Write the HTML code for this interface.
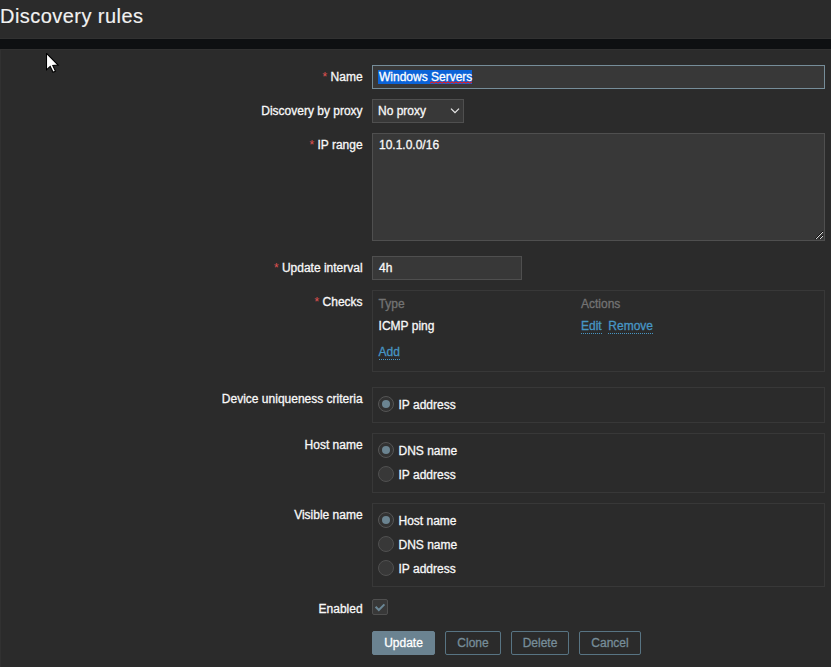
<!DOCTYPE html>
<html><head><meta charset="utf-8">
<style>
html,body{margin:0;padding:0;}
body{width:831px;height:667px;overflow:hidden;background:#2b2b2b;font-family:"Liberation Sans",Arial,sans-serif;font-size:12px;color:#f8f8f8;position:relative;-webkit-text-stroke:0.3px;}
.abs{position:absolute;}
h1{position:absolute;left:0;top:4px;margin:0;font-size:20px;letter-spacing:0.45px;font-weight:normal;line-height:24px;color:#f2f2f2;white-space:nowrap;-webkit-text-stroke:0.15px;}
.band{position:absolute;left:0;top:39px;width:831px;height:10px;background:#0e1012;}
.lbl{position:absolute;right:468.4px;white-space:nowrap;line-height:14px;height:14px;text-align:right;}
.req{color:#e05252;-webkit-text-stroke:0;}
.inp{position:absolute;box-sizing:border-box;background:#383838;border:1px solid #4f4f4f;line-height:14px;padding:4px 6px;white-space:nowrap;}
.box{position:absolute;box-sizing:border-box;border:1px solid #383838;left:372px;width:453px;}
.t{position:absolute;line-height:14px;white-space:nowrap;}
.grey{color:#737373;}
a.lnk{color:#4796c4;text-decoration:none;border-bottom:1px dotted #4796c4;}
.radio{position:absolute;box-sizing:border-box;width:16px;height:16px;border-radius:50%;border:1px solid #505050;background:#383838;}
.radio.on{background:#323232;border-color:#555;}
.radio.on::after{content:"";position:absolute;left:3px;top:3px;width:8px;height:8px;border-radius:50%;background:#6b8491;}
.btn{position:absolute;box-sizing:border-box;top:631px;height:24px;line-height:22px;text-align:center;border:1px solid #587483;color:#768d99;border-radius:2px;background:transparent;}
.btn.pri{background:#6b8391;border-color:#6b8391;color:#fff;}
</style></head><body>
<h1>Discovery rules</h1>
<div class="abs" style="left:0;top:38px;width:831px;height:1px;background:#313131"></div>
<div class="band"></div>
<div class="abs" style="left:0;top:49px;width:831px;height:1px;background:#313131"></div>
<div class="abs" style="left:0;top:49px;width:1px;height:618px;background:#313131"></div>
<svg class="abs" style="left:46px;top:53px" width="14" height="21" viewBox="0 0 14 21"><path d="M0.5 0.3 L0.5 16.8 L4.2 13.4 L7.1 19.3 L9.5 18.2 L6.8 12.4 L12.1 12.1 Z" fill="#fff" stroke="#000" stroke-width="1.1" stroke-linejoin="miter"/></svg>

<div class="lbl" style="top:70px"><span class="req">*</span> Name</div>
<div class="inp" style="left:372px;top:65px;width:453px;height:24px;border-color:#768d99;"><span style="background:#0b63d8;color:#fff;display:inline-block;height:14px;margin-left:-1px;padding-left:1px;">Windows Servers</span></div>

<svg class="abs" style="left:430px;top:81px" width="42" height="3" viewBox="0 0 42 3"><path d="M0 2.2 L2 0.8 L4 2.2 L6 0.8 L8 2.2 L10 0.8 L12 2.2 L14 0.8 L16 2.2 L18 0.8 L20 2.2 L22 0.8 L24 2.2 L26 0.8 L28 2.2 L30 0.8 L32 2.2 L34 0.8 L36 2.2 L38 0.8 L40 2.2 L42 0.8 L44 2.2" fill="none" stroke="#f01818" stroke-width="1.1"/></svg>
<div class="lbl" style="top:104px">Discovery by proxy</div>
<div class="inp" style="left:372px;top:99px;width:92px;height:24px;padding-left:5px;">No proxy
<svg class="abs" style="right:2px;top:7px" width="12" height="8" viewBox="0 0 12 8"><path d="M2 1.6 L6 5.6 L10 1.6" fill="none" stroke="#e8e8e8" stroke-width="1.25"/></svg></div>

<div class="lbl" style="top:138px"><span class="req">*</span> IP range</div>
<div class="inp" style="left:372px;top:133px;width:453px;height:108px;">10.1.0.0/16
<svg style="position:fixed;left:815px;top:231px" width="8" height="8" viewBox="0 0 8 8" shape-rendering="crispEdges"><rect x="0" y="7" width="1" height="1" fill="#101010"/><rect x="1" y="6" width="1" height="1" fill="#101010"/><rect x="2" y="5" width="1" height="1" fill="#101010"/><rect x="3" y="4" width="1" height="1" fill="#101010"/><rect x="4" y="3" width="1" height="1" fill="#101010"/><rect x="5" y="2" width="1" height="1" fill="#101010"/><rect x="6" y="1" width="1" height="1" fill="#101010"/><rect x="7" y="0" width="1" height="1" fill="#101010"/><rect x="4" y="7" width="1" height="1" fill="#101010"/><rect x="5" y="6" width="1" height="1" fill="#101010"/><rect x="6" y="5" width="1" height="1" fill="#101010"/><rect x="7" y="4" width="1" height="1" fill="#101010"/><rect x="1" y="7" width="1" height="1" fill="#d8d8d8"/><rect x="2" y="6" width="1" height="1" fill="#d8d8d8"/><rect x="3" y="5" width="1" height="1" fill="#d8d8d8"/><rect x="4" y="4" width="1" height="1" fill="#d8d8d8"/><rect x="5" y="3" width="1" height="1" fill="#d8d8d8"/><rect x="6" y="2" width="1" height="1" fill="#d8d8d8"/><rect x="7" y="1" width="1" height="1" fill="#d8d8d8"/><rect x="5" y="7" width="1" height="1" fill="#d8d8d8"/><rect x="6" y="6" width="1" height="1" fill="#d8d8d8"/><rect x="7" y="5" width="1" height="1" fill="#d8d8d8"/></svg></div>

<div class="lbl" style="top:261px"><span class="req">*</span> Update interval</div>
<div class="inp" style="left:372px;top:256px;width:150px;height:24px;">4h</div>

<div class="lbl" style="top:295px"><span class="req">*</span> Checks</div>
<div class="box" style="top:290px;height:82px;"></div>
<div class="t grey" style="left:378.6px;top:297px">Type</div>
<div class="t grey" style="left:581px;top:297px">Actions</div>
<div class="t" style="left:378.6px;top:319px">ICMP ping</div>
<div class="t" style="left:581px;top:319px"><a class="lnk">Edit</a>&nbsp; <a class="lnk">Remove</a></div>
<div class="t" style="left:378.6px;top:345px"><a class="lnk">Add</a></div>

<div class="lbl" style="top:392px">Device uniqueness criteria</div>
<div class="box" style="top:387px;height:36px;"></div>
<div class="radio on" style="left:378px;top:396px"></div>
<div class="t" style="left:398.5px;top:398px">IP address</div>

<div class="lbl" style="top:438px">Host name</div>
<div class="box" style="top:433px;height:60px;"></div>
<div class="radio on" style="left:378px;top:442px"></div>
<div class="t" style="left:398.5px;top:444px">DNS name</div>
<div class="radio" style="left:378px;top:466px"></div>
<div class="t" style="left:398.5px;top:468px">IP address</div>

<div class="lbl" style="top:508px">Visible name</div>
<div class="box" style="top:503px;height:84px;"></div>
<div class="radio on" style="left:378px;top:512px"></div>
<div class="t" style="left:398.5px;top:514px">Host name</div>
<div class="radio" style="left:378px;top:536px"></div>
<div class="t" style="left:398.5px;top:538px">DNS name</div>
<div class="radio" style="left:378px;top:560px"></div>
<div class="t" style="left:398.5px;top:562px">IP address</div>

<div class="lbl" style="top:602px">Enabled</div>
<div class="abs" style="left:372px;top:599px;width:16px;height:16px;box-sizing:border-box;border:1px solid #4f4f4f;background:#383838;border-radius:2px;">
<svg class="abs" style="left:-1px;top:-1px" width="16" height="16" viewBox="0 0 16 16"><path d="M3.6 7.8 L6.8 11 L12.4 5.4" fill="none" stroke="#6b8796" stroke-width="2"/></svg></div>

<div class="btn pri" style="left:372px;width:63px;">Update</div>
<div class="btn" style="left:445px;width:56px;">Clone</div>
<div class="btn" style="left:511px;width:58px;">Delete</div>
<div class="btn" style="left:579px;width:62px;">Cancel</div>
</body></html>
